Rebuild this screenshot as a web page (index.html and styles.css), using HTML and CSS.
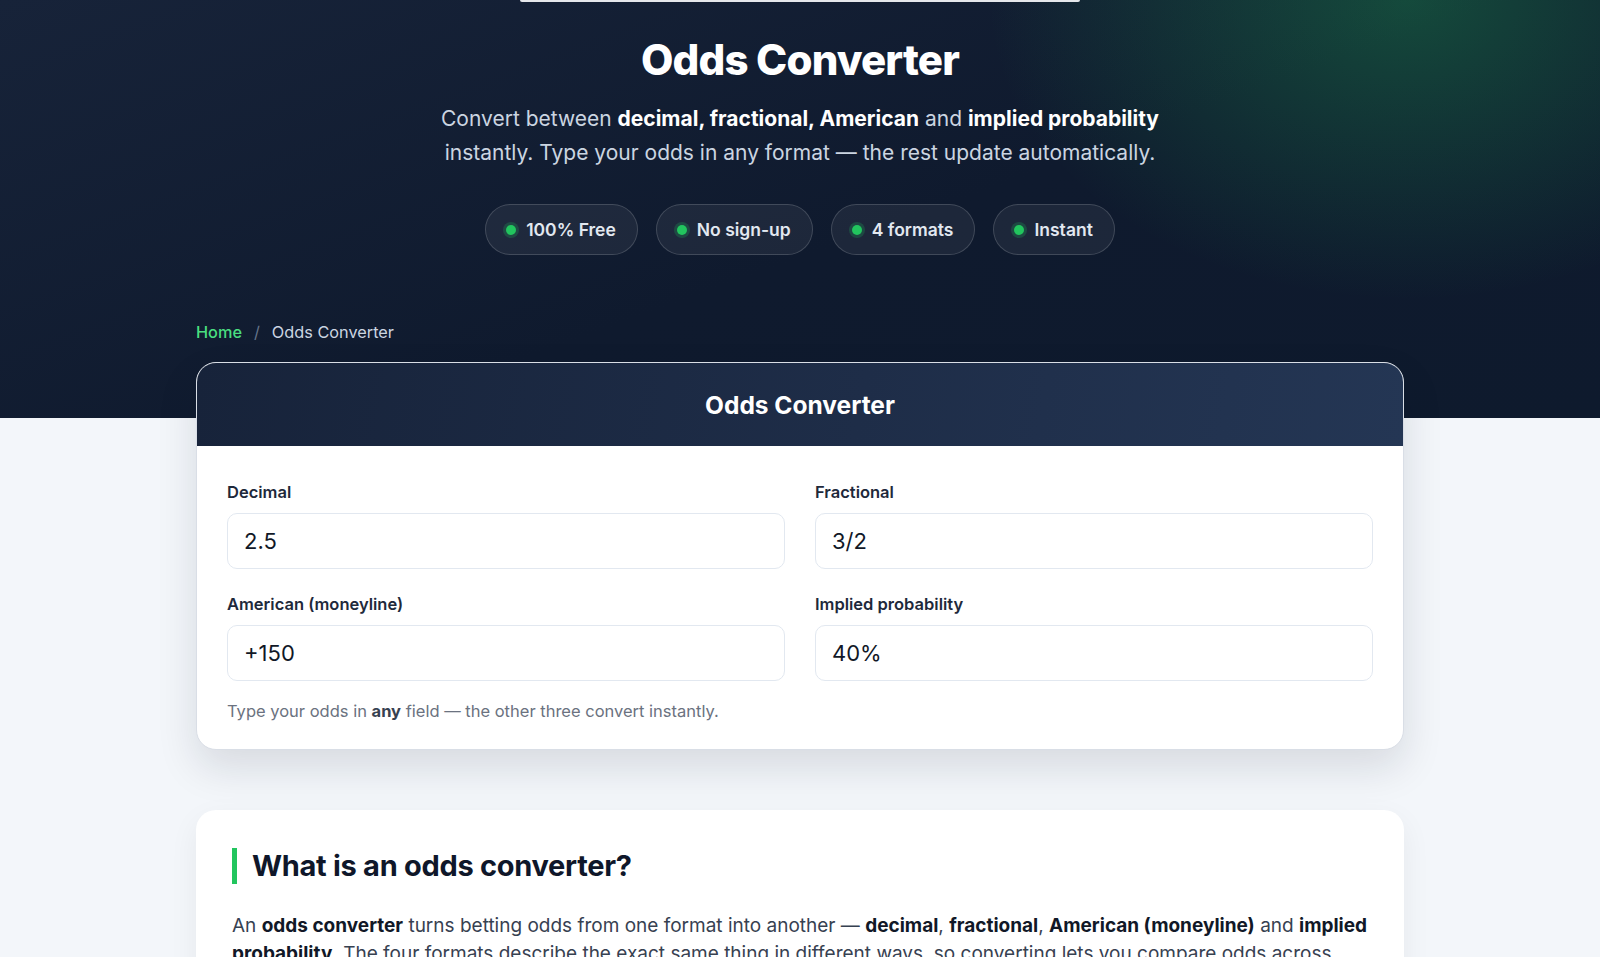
FILE: index.html
```html
<!DOCTYPE html>
<html lang="en">
<head>
  <meta charset="UTF-8" />
  <meta name="viewport" content="width=device-width, initial-scale=1.0"/>
  <title>Odds Converter</title>

  <link rel="stylesheet" href="styles.css">
</head>

<body>
  <header class="hero">
    <div class="nav-edge"></div>

    <h1>Odds Converter</h1>
    <p class="hero-sub">
      Convert between <strong>decimal, fractional, American</strong> and <strong>implied probability</strong>
      instantly. Type your odds in any format — the rest update automatically.
    </p>

    <div class="pills">
      <span class="pill"><span class="dot"></span>100% Free</span>
      <span class="pill"><span class="dot"></span>No sign-up</span>
      <span class="pill"><span class="dot"></span>4 formats</span>
      <span class="pill"><span class="dot"></span>Instant</span>
    </div>
  </header>

  <main class="container">
    <nav class="breadcrumb">
      <a href="#">Home</a>
      <span class="sep">/</span>
      <span>Odds Converter</span>
    </nav>

    <section class="tool-card">
      <div class="tool-head">Odds Converter</div>

      <div class="tool-body">
        <div class="fields">
          <div class="field">
            <label for="decimal">Decimal</label>
            <input type="text" id="decimal" value="2.5" />
          </div>
          <div class="field">
            <label for="fractional">Fractional</label>
            <input type="text" id="fractional" value="3/2" />
          </div>
          <div class="field">
            <label for="american">American (moneyline)</label>
            <input type="text" id="american" value="+150" />
          </div>
          <div class="field">
            <label for="implied">Implied probability</label>
            <input type="text" id="implied" value="40%" />
          </div>
        </div>

        <p class="hint">Type your odds in <strong>any</strong> field — the other three convert instantly.</p>
      </div>
    </section>

    <section class="info-card">
      <h2>What is an odds converter?</h2>
      <p>
        An <strong>odds converter</strong> turns betting odds from one format into another — <strong>decimal</strong>,
        <strong>fractional</strong>, <strong>American (moneyline)</strong> and <strong>implied probability</strong>.
        The four formats describe the exact same thing in different ways, so converting lets you compare odds across
        bookmakers and regions without doing the maths yourself.
      </p>
    </section>
  </main>

  <script>
    const decimalInput = document.getElementById("decimal");
    const fractionalInput = document.getElementById("fractional");
    const americanInput = document.getElementById("american");
    const impliedInput = document.getElementById("implied");

    function gcd(a, b) {
      return b ? gcd(b, a % b) : a;
    }

    function fillFrom(dec, skip) {
      if (!dec || dec <= 1) return;
      if (skip !== "decimal") decimalInput.value = +dec.toFixed(2);
      if (skip !== "fractional") {
        const num = Math.round((dec - 1) * 100);
        const g = gcd(num, 100);
        fractionalInput.value = `${num / g}/${100 / g}`;
      }
      if (skip !== "american") {
        americanInput.value = dec >= 2
          ? `+${Math.round((dec - 1) * 100)}`
          : `${Math.round(-100 / (dec - 1))}`;
      }
      if (skip !== "implied") impliedInput.value = `${+(100 / dec).toFixed(2)}%`;
    }

    decimalInput.addEventListener("input", () => fillFrom(parseFloat(decimalInput.value), "decimal"));

    fractionalInput.addEventListener("input", () => {
      const parts = fractionalInput.value.split("/");
      if (parts.length === 2 && +parts[1]) fillFrom(1 + parts[0] / parts[1], "fractional");
    });

    americanInput.addEventListener("input", () => {
      const us = parseFloat(americanInput.value);
      if (!us) return;
      fillFrom(us > 0 ? 1 + us / 100 : 1 + 100 / Math.abs(us), "american");
    });

    impliedInput.addEventListener("input", () => {
      const p = parseFloat(impliedInput.value);
      if (p > 0 && p < 100) fillFrom(100 / p, "implied");
    });
  </script>
</body>
</html>
```

FILE: styles.css
```css
* {
  box-sizing: border-box;
}

body {
  font-family: Inter, "Noto Sans", sans-serif;
  background: #f3f6fa;
  margin: 0;
  color: #1f2937;
}

.hero {
  height: 418px;
  text-align: center;
  background:
    radial-gradient(ellipse 420px 300px at 88% 0%, rgba(34, 197, 94, 0.28), rgba(34, 197, 94, 0) 100%),
    linear-gradient(160deg, #172339 0%, #0f1a2e 55%, #0e1a2d 100%);
}

.nav-edge {
  width: 560px;
  height: 2px;
  margin: 0 auto;
  background: #e5e7eb;
  border-radius: 0 0 4px 4px;
}

.hero h1 {
  margin: 34px 0 0;
  font-size: 42px;
  line-height: 48px;
  font-weight: 800;
  letter-spacing: -0.02em;
  color: #ffffff;
}

.hero-sub {
  max-width: 780px;
  margin: 18px auto 0;
  font-size: 21px;
  line-height: 34px;
  color: #cbd5e1;
}

.hero-sub strong {
  color: #ffffff;
  font-weight: 700;
}

.pills {
  display: flex;
  justify-content: center;
  gap: 18px;
  margin-top: 34px;
}

.pill {
  display: flex;
  align-items: center;
  gap: 10px;
  padding: 13px 21px 13px 20px;
  font-size: 17.5px;
  line-height: 23px;
  font-weight: 600;
  color: #e2e8f0;
  background: rgba(255, 255, 255, 0.06);
  border: 1px solid rgba(255, 255, 255, 0.16);
  border-radius: 999px;
}

.dot {
  width: 10px;
  height: 10px;
  border-radius: 50%;
  background: #22c55e;
  box-shadow: 0 0 0 3px rgba(34, 197, 94, 0.22);
}

.container {
  max-width: 1208px;
  margin: -98px auto 0;
  padding-bottom: 60px;
}

.breadcrumb {
  display: flex;
  gap: 12px;
  font-size: 16.3px;
  line-height: 24px;
  color: #cbd5e1;
}

.breadcrumb a {
  color: #4ade80;
  text-decoration: none;
  font-weight: 500;
}

.breadcrumb .sep {
  color: #64748b;
}

.tool-card {
  margin-top: 18px;
  background: #ffffff;
  border: 1px solid #d9dee6;
  border-radius: 20px;
  overflow: hidden;
  box-shadow: 0 18px 40px rgba(15, 23, 42, 0.12);
}

.tool-head {
  height: 83px;
  display: flex;
  align-items: center;
  justify-content: center;
  font-size: 24.5px;
  font-weight: 700;
  color: #ffffff;
  background: linear-gradient(100deg, #17233a 0%, #1e2d48 55%, #243654 100%);
}

.tool-body {
  padding: 36px 30px 27px;
}

.fields {
  display: grid;
  grid-template-columns: 1fr 1fr;
  column-gap: 30px;
  row-gap: 25px;
}

.field label {
  display: block;
  margin-bottom: 11px;
  font-size: 16.5px;
  line-height: 20px;
  font-weight: 600;
  color: #1e293b;
}

.field input {
  width: 100%;
  height: 56px;
  padding: 0 16px;
  font-family: inherit;
  font-size: 22px;
  color: #111827;
  border: 1px solid #e2e8f0;
  border-radius: 10px;
  background: #ffffff;
}

.field input:focus {
  outline: none;
  border-color: #22c55e;
}

.hint {
  margin: 19px 0 0;
  font-size: 16.5px;
  line-height: 22px;
  color: #6b7280;
}

.hint strong {
  color: #374151;
}

.info-card {
  margin-top: 60px;
  padding: 38px 36px 36px;
  background: #ffffff;
  border-radius: 20px;
  box-shadow: 0 10px 30px rgba(15, 23, 42, 0.06);
}

.info-card h2 {
  margin: 0;
  padding-left: 15px;
  border-left: 5px solid #22c55e;
  font-size: 29px;
  line-height: 36px;
  font-weight: 700;
  letter-spacing: -0.01em;
  color: #0f172a;
}

.info-card p {
  margin: 28px 0 0;
  font-size: 19px;
  line-height: 28px;
  color: #374151;
}

.info-card p strong {
  color: #111827;
}
```
